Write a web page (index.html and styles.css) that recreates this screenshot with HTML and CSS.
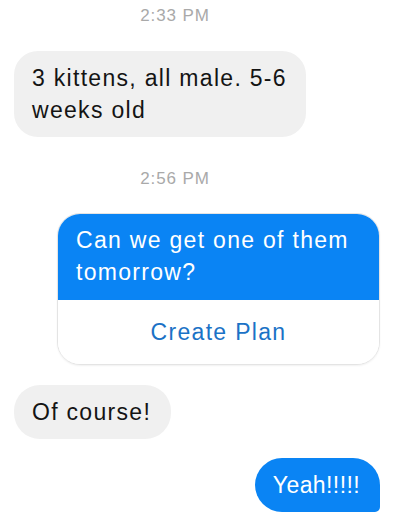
FILE: index.html
```html
<!DOCTYPE html>
<html>
<head>
<meta charset="utf-8">
<link rel="stylesheet" href="styles.css">
</head>
<body>
<div class="chat">
  <div class="time">2:33 PM</div>
  <div class="bubble in first">3 kittens, all male. 5-6 weeks old</div>
  <div class="time second">2:56 PM</div>
  <div class="card">
    <div class="card-msg">Can we get one of them tomorrow?</div>
    <div class="card-action">Create Plan</div>
  </div>
  <div class="bubble in reply">Of course!</div>
  <div class="bubble out last">Yeah!!!!!</div>
</div>
</body>
</html>
```
FILE: styles.css
```css
html, body {
  margin: 0;
  padding: 0;
  background: #ffffff;
}

body {
  width: 400px;
  font-family: "Liberation Sans", Arial, sans-serif;
}

.chat {
  display: flex;
  flex-direction: column;
  align-items: flex-start;
  padding: 6px 20px 0 14px;
}

.time {
  align-self: stretch;
  text-align: center;
  padding-right: 44px;
  font-size: 17px;
  line-height: 20px;
  letter-spacing: 0.9px;
  color: #a9a9a9;
}

.time.second {
  margin-top: 32px;
}

.bubble {
  font-size: 23px;
  line-height: 32px;
  letter-spacing: 1.3px;
  padding: 11px 20px 11px 18px;
  border-radius: 26px;
  max-width: 300px;
  box-sizing: border-box;
}

.bubble.in {
  background: #f0f0f0;
  color: #141414;
}

.bubble.out {
  background: #0a84f4;
  color: #ffffff;
  align-self: flex-end;
  border-radius: 27px 27px 5px 27px;
  letter-spacing: 0.4px;
}

.first {
  margin-top: 25px;
  border-radius: 24px;
  max-width: 292px;
  padding-right: 16px;
}

.reply {
  margin-top: 20px;
}

.last {
  margin-top: 19px;
}

.card {
  align-self: flex-end;
  margin-top: 24px;
  width: 323px;
  box-sizing: border-box;
  border: 1px solid #e4e4e4;
  border-radius: 23px;
  overflow: hidden;
  box-shadow: 0 1px 2px rgba(0, 0, 0, 0.06);
  font-size: 23px;
  letter-spacing: 1.3px;
}

.card-msg {
  background: #0a84f4;
  color: #ffffff;
  line-height: 32px;
  margin: -1px -1px 0 -1px;
  padding: 11px 24px 12px 19px;
}

.card-action {
  height: 64px;
  line-height: 64px;
  text-align: center;
  color: #1b72c6;
  background: #ffffff;
}
```
